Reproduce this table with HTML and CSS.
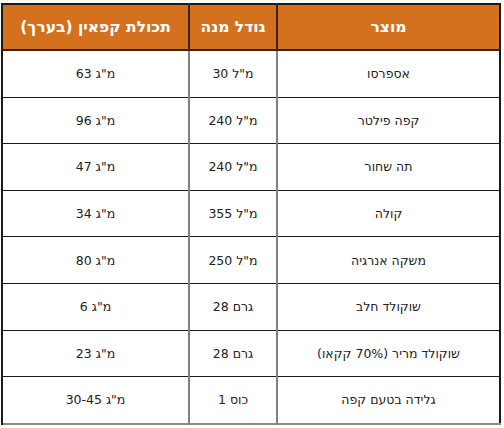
FILE: index.html
```html
<!DOCTYPE html>
<html lang="he" dir="rtl">
<head>
<meta charset="utf-8">
<link rel="stylesheet" href="styles.css">
</head>
<body>
<table class="caffeine">
  <colgroup>
    <col class="c-product">
    <col class="c-size">
    <col class="c-amount">
  </colgroup>
  <thead>
    <tr><th>מוצר</th><th>גודל מנה</th><th>תכולת קפאין (בערך)</th></tr>
  </thead>
  <tbody>
    <tr><td>אספרסו</td><td>מ"ל 30</td><td>מ"ג 63</td></tr>
    <tr><td>קפה פילטר</td><td>מ"ל 240</td><td>מ"ג 96</td></tr>
    <tr><td>תה שחור</td><td>מ"ל 240</td><td>מ"ג 47</td></tr>
    <tr><td>קולה</td><td>מ"ל 355</td><td>מ"ג 34</td></tr>
    <tr><td>משקה אנרגיה</td><td>מ"ל 250</td><td>מ"ג 80</td></tr>
    <tr><td>שוקולד חלב</td><td>גרם 28</td><td>מ"ג 6</td></tr>
    <tr><td>שוקולד מריר (70% קקאו)</td><td>גרם 28</td><td>מ"ג 23</td></tr>
    <tr><td>גלידה בטעם קפה</td><td>כוס 1</td><td>מ"ג 30-45</td></tr>
  </tbody>
</table>
</body>
</html>
```
FILE: styles.css
```css
html, body {
  margin: 0;
  padding: 0;
  background: #ffffff;
}
body {
  padding: 3px;
  font-family: "DejaVu Sans", "Liberation Sans", sans-serif;
}
.caffeine {
  direction: rtl;
  width: 498px;
  border-collapse: collapse;
  table-layout: fixed;
  border-top: 2px solid #1a1a1a;
  border-left: 2px solid #1a1a1a;
  border-right: 2px solid #1a1a1a;
  border-bottom: 2px solid #8a8a8a;
}
.c-product { width: 223px; }
.c-size { width: 88px; }
.c-amount { width: 187px; }
.caffeine th {
  background: #d4711f;
  color: #ffffff;
  font-weight: bold;
  font-size: 15.5px;
  height: 44px;
  padding: 0;
  text-align: center;
  border-bottom: 2px solid #3a2210;
  border-left: 2px solid #3a2210;
}
.caffeine td {
  color: #222222;
  font-size: 12.5px;
  height: 45.6px;
  padding: 0;
  text-align: center;
  border-top: 1px solid #1a1a1a;
  border-left: 2px solid #808080;
}
.caffeine td:last-child,
.caffeine th:last-child {
  border-left: 2px solid #1a1a1a;
}
```
